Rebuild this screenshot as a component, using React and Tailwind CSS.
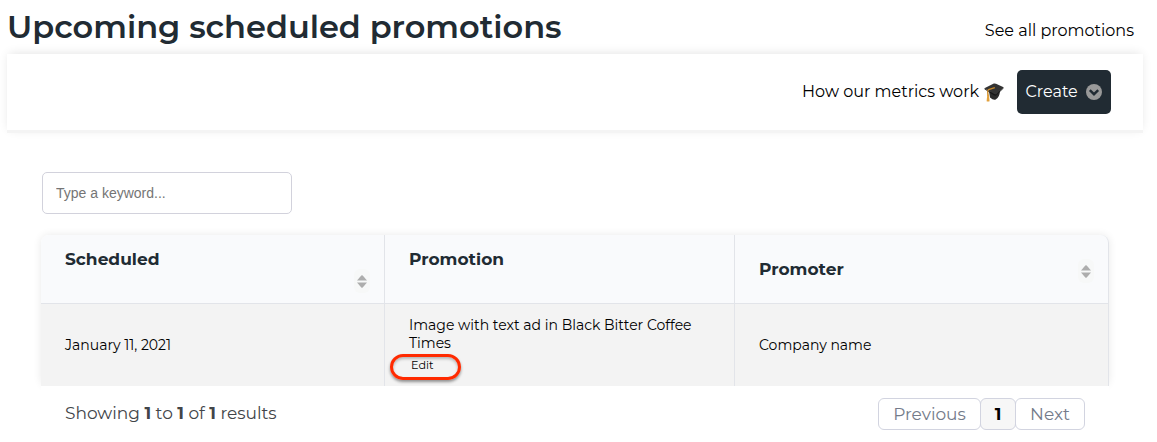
import React, { useState } from 'react';

const promotions = [
  {
    id: 1,
    scheduled: 'January 11, 2021',
    title: 'Image with text ad in Black Bitter Coffee Times',
    promoter: 'Company name',
  },
];

function GraduationCap() {
  return (
    <svg width="20" height="19" viewBox="0 0 20 19" className="shrink-0">
      <path d="M5 8.5 L6 14.5 Q10 18 12 16.2 Q15.5 14.5 16 8 Z" fill="#2b2b2b" />
      <path d="M0.4 5.2 L9.8 0.6 Q11 0.4 12 0.8 L19.6 4.2 L12.2 11.4 Q11 11.8 9.6 10.8 Z" fill="#333333" />
      <path d="M0.4 5.2 L9.6 10.8 Q11 11.8 12.2 11.4 L19.6 4.2 L19.4 5.4 L12.2 12.5 Q10.8 13 9.4 11.9 L0.6 6.2 Z" fill="#161616" />
      <path d="M10.8 4.6 L4.6 6.6 Q3.6 7 3.7 8.4 L4 13" fill="none" stroke="#c98a2b" strokeWidth="1.4" />
      <path d="M3.3 11.6 L4.9 11.6 L5.6 18.2 Q4 19 2.6 18.2 Z" fill="#e2a13c" />
    </svg>
  );
}

function ChevronCircle() {
  return (
    <svg width="16" height="16" viewBox="0 0 16 16" className="shrink-0">
      <circle cx="8" cy="8" r="8" fill="#999999" />
      <path d="M3.8 6.1 L8 10.2 L12.2 6.1" fill="none" stroke="#212b33" strokeWidth="2.4" />
    </svg>
  );
}

function SortButton() {
  return (
    <button className="flex h-6 w-4 items-center justify-center rounded-md bg-[#f7f8f8]">
      <svg width="10" height="13" viewBox="0 0 10 13">
        <path d="M0 5.5 L4.3 0.6 Q5 0 5.7 0.6 L10 5.5 Z" fill="#adadad" />
        <path d="M0 7.5 L4.3 12.4 Q5 13 5.7 12.4 L10 7.5 Z" fill="#adadad" />
      </svg>
    </button>
  );
}

function App() {
  const [keyword, setKeyword] = useState('');

  return (
    <div className="h-[442px] overflow-hidden bg-white font-[Montserrat,Inter,sans-serif] text-black">
      <div className="flex h-[54px] items-start justify-between pl-[7px] pr-[23px]">
        <h1 className="whitespace-nowrap pt-[5px] text-[32px] leading-[44px] font-semibold text-[#212b33]">
          Upcoming scheduled promotions
        </h1>
        <a className="whitespace-nowrap pt-[19px] text-base leading-6">See all promotions</a>
      </div>

      <div className="ml-[7px] mr-[14px] flex h-[79px] items-start justify-end border-b-[3px] border-[#f4f4f4] bg-white pt-4 pr-8 shadow-[0_-2px_10px_-2px_rgba(0,0,0,0.12)]">
        <div className="flex h-11 items-center">
          <a className="whitespace-nowrap text-base leading-6">How our metrics work</a>
          <span className="ml-[5px] mr-[13px]"><GraduationCap /></span>
          <button className="flex h-11 w-[94px] items-center justify-between rounded-[5px] bg-[#212b33] pl-[8.5px] pr-[9px] text-base text-white">
            <span>Create</span>
            <ChevronCircle />
          </button>
        </div>
      </div>

      <div className="pl-[42px] pt-[39px]">
        <input
          className="block h-[42px] w-[250px] rounded-[5px] border border-[#d2d2dc] px-[13px] font-['Liberation_Sans',Arial,sans-serif] text-[14px] placeholder:text-[#757575]"
          placeholder="Type a keyword..."
          value={keyword}
          onChange={(e) => setKeyword(e.target.value)}
        />
      </div>

      <div className="ml-[41px] mt-[21px] w-[1068px] rounded-lg shadow-[0_0_8px_rgba(0,0,0,0.09)]">
        <table className="w-full table-fixed border-separate border-spacing-0 text-left">
          <colgroup>
            <col className="w-[344px]" />
            <col className="w-[350px]" />
            <col className="w-[374px]" />
          </colgroup>
          <thead>
            <tr className="h-[69px] text-[17px] text-[#212b33]">
              <th className="rounded-tl-lg border-r border-b border-[#e2e4e9] bg-[#f9fafc] p-0 pl-6 align-top">
                <div className="pt-3 leading-6 font-bold">Scheduled</div>
                <div className="-mt-[2px] flex justify-end pr-[14px]"><SortButton /></div>
              </th>
              <th className="border-r border-b border-[#e2e4e9] bg-[#f9fafc] p-0 pl-6 align-top">
                <div className="pt-3 leading-6 font-bold">Promotion</div>
              </th>
              <th className="rounded-tr-lg border-r border-b border-[#e2e4e9] bg-[#f9fafc] p-0 pl-6">
                <div className="flex items-center justify-between pt-1 pr-[14px]">
                  <span className="-mt-1 leading-6 font-bold">Promoter</span>
                  <SortButton />
                </div>
              </th>
            </tr>
          </thead>
          <tbody>
            {promotions.map((promotion) => (
              <tr key={promotion.id} className="h-[82px] bg-[#f3f3f3] text-[14px] leading-[18px]">
                <td className="border-r border-[#e2e4e9] p-0 pl-6">{promotion.scheduled}</td>
                <td className="border-r border-[#e2e4e9] p-0 pt-3 pl-6 align-top">
                  <div className="w-[300px]">{promotion.title}</div>
                  <a className="-ml-[19px] mt-[2px] flex h-[26px] w-[71px] items-start rounded-[13px] border-[3px] border-[#ff2a00] pl-[18px] text-[11.2px] leading-4 shadow-[0_2px_3px_rgba(0,0,0,0.4),inset_0_2px_3px_rgba(0,0,0,0.25)]">
                    Edit
                  </a>
                </td>
                <td className="border-r border-[#e2e4e9] p-0 pl-6">{promotion.promoter}</td>
              </tr>
            ))}
          </tbody>
        </table>
      </div>

      <div className="ml-[41px] flex h-14 w-[1068px] items-center justify-between bg-white pl-6 pr-6 text-[17px]">
        <p className="text-[#424549]">
          Showing <b>1</b> to <b>1</b> of <b>1</b> results
        </p>
        <div className="flex text-[#747b8a]">
          <button className="h-8 w-[103px] rounded-md border border-[#d2d4e0] pt-[2px]">Previous</button>
          <button className="-ml-px h-8 w-9 rounded-md border border-[#d2d4e0] bg-[#f7f7f7] pt-[2px] font-bold text-black">1</button>
          <button className="-ml-px h-8 w-[70px] rounded-md border border-[#d2d4e0] pt-[2px]">Next</button>
        </div>
      </div>
    </div>
  );
}

export default App;
